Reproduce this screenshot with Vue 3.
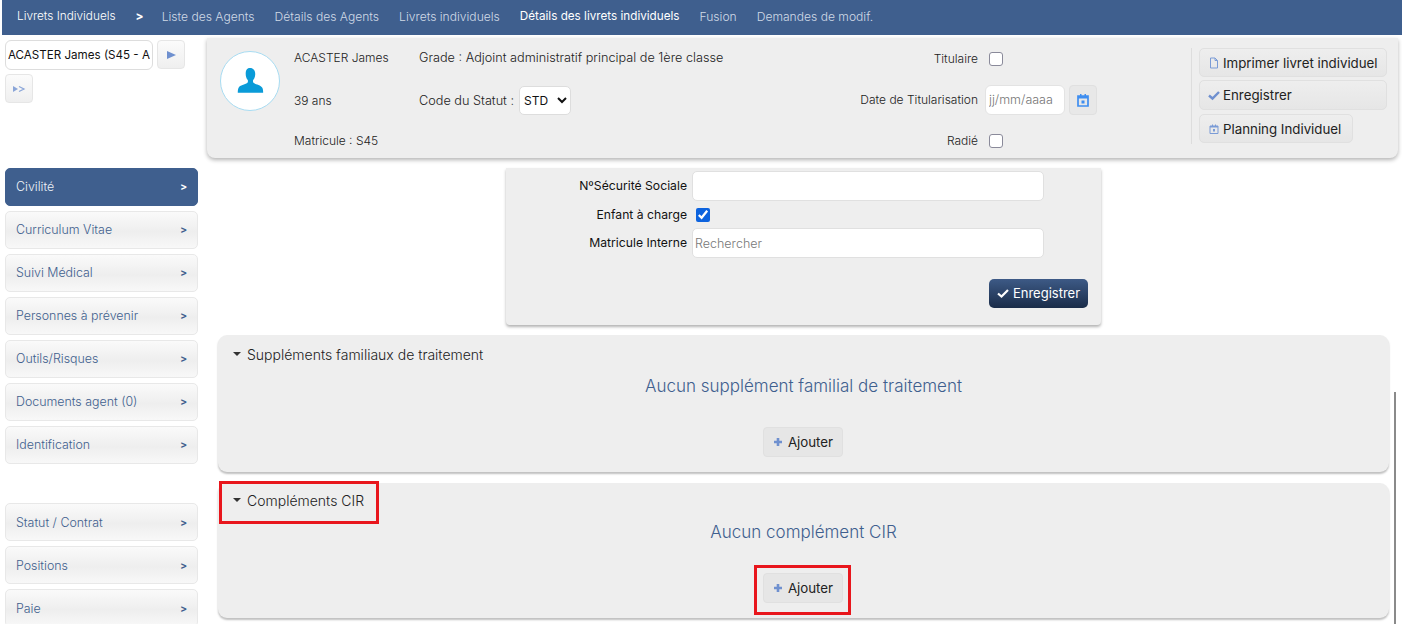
<script setup>
const navItems = [
  { label: 'Liste des Agents' },
  { label: 'Détails des Agents' },
  { label: 'Livrets individuels' },
  { label: 'Détails des livrets individuels', active: true },
  { label: 'Fusion' },
  { label: 'Demandes de modif.' },
]
const sideTop = ['Curriculum Vitae', 'Suivi Médical', 'Personnes à prévenir', 'Outils/Risques', 'Documents agent (0)', 'Identification']
const sideBottom = ['Statut / Contrat', 'Positions', 'Paie']
</script>

<template>
  <div class="page">
    <nav class="nav">
      <span class="nav-brand">Livrets Individuels</span>
      <span class="nav-sep">&gt;</span>
      <a v-for="n in navItems" :key="n.label" class="nav-link" :class="{ active: n.active }">{{ n.label }}</a>
    </nav>

    <div class="body">
      <aside class="side">
        <div class="picker">
          <input class="picker-input" value="ACASTER James (S45 - Adjoint" />
          <button class="sq"><svg width="12" height="12" viewBox="0 0 12 12"><path d="M2 2l9 4-9 4z" fill="#6f90cf"/></svg></button>
          <button class="sq"><svg width="14" height="10" viewBox="0 0 14 10"><path d="M1 2l5 3-5 3z" fill="#8aa5d8"/><path d="M7 2.500l5 2.500-5 2.500" fill="none" stroke="#8aa5d8" stroke-width="1.200"/></svg></button>
        </div>
        <div class="menu">
          <div class="item on"><span>Civilité</span><b>&gt;</b></div>
          <div v-for="s in sideTop" :key="s" class="item"><span>{{ s }}</span><b>&gt;</b></div>
        </div>
        <div class="menu second">
          <div v-for="s in sideBottom" :key="s" class="item"><span>{{ s }}</span><b>&gt;</b></div>
        </div>
      </aside>

      <main class="main">
        <section class="head">
          <div class="avatar">
            <svg width="28" height="28" viewBox="0 0 30 30"><path d="M15 1c3.600 0 5.600 2.700 5.600 6.400 0 2.400-.8 4.700-2 6.300-.6.800-.6 2.800.4 3.500 2.300 1.500 7.800 2.300 9.200 5 .7 1.300.9 3.400.9 5.300H1.900c0-1.900.2-4 .9-5.300 1.400-2.700 6.900-3.500 9.200-5 1-.7 1-2.700.4-3.500-1.200-1.600-2-3.900-2-6.300C10.400 3.700 11.400 1 15 1z" fill="#0a9bd8"/></svg>
          </div>
          <div class="who">
            <span>ACASTER James</span>
            <span>39 ans</span>
            <span>Matricule : S45</span>
          </div>
          <div class="grade">
            <span>Grade : Adjoint administratif principal de 1ère classe</span>
            <span class="statut">Code du Statut :
              <select class="sel"><option>STD</option></select>
            </span>
          </div>
          <div class="status">
            <label class="st-row"><span>Titulaire</span><input type="checkbox" class="cb" /></label>
            <div class="st-row">
              <span>Date de Titularisation</span>
              <input class="date" placeholder="jj/mm/aaaa" />
              <button class="cal"><svg width="12" height="14" viewBox="0 0 12 14"><path d="M1 3h10v10H1z" fill="none" stroke="#3f8ef0" stroke-width="1.700"/><path d="M1 3h10v2.500H1zM3 1h1.500v2H3zM7.500 1H9v2H7.500zM4.500 7.500h3v3h-3z" fill="#3f8ef0"/></svg></button>
            </div>
            <label class="st-row"><span>Radié</span><input type="checkbox" class="cb" /></label>
          </div>
          <div class="acts">
            <button class="act wide"><svg width="12" height="12" viewBox="0 0 12 12"><path d="M2.500 1h4.500l2.500 2.500V11h-7z M7 1v2.500h2.500" fill="none" stroke="#7a9bd6"/></svg>Imprimer livret individuel</button>
            <button class="act wide tall"><svg width="12" height="12" viewBox="0 0 12 12"><path d="M1 6.500l3.500 3L11 3" fill="none" stroke="#6f90cf" stroke-width="2.400"/></svg>Enregistrer</button>
            <button class="act plan"><svg width="12" height="12" viewBox="0 0 12 12"><path d="M2 3h8v7.500H2z" fill="none" stroke="#7a9bd6"/><path d="M2 3h8v1.500H2zM4 1.500h1V3H4zM7 1.500h1V3H7zM5 6h2v2.500H5z" fill="#7a9bd6"/></svg>Planning Individuel</button>
          </div>
        </section>

        <section class="form">
          <div class="f-row"><label>NºSécurité Sociale</label><input class="txt" /></div>
          <div class="f-row tight"><label>Enfant à charge</label><input type="checkbox" class="cb2" checked /></div>
          <div class="f-row"><label>Matricule Interne</label><input class="txt" placeholder="Rechercher" /></div>
          <div class="f-foot">
            <button class="save"><svg width="12" height="12" viewBox="0 0 12 12"><path d="M1 6.500l3.500 3L11 3" fill="none" stroke="#fff" stroke-width="2.200"/></svg>Enregistrer</button>
          </div>
        </section>

        <section class="panel">
          <h3 class="p-title"><i class="caret"></i>Suppléments familiaux de traitement</h3>
          <p class="p-empty">Aucun supplément familial de traitement</p>
          <button class="add"><svg width="10" height="10" viewBox="0 0 10 10"><path d="M5 1v8M1 5h8" stroke="#6f90cf" stroke-width="2.600"/></svg>Ajouter</button>
        </section>

        <section class="panel compact">
          <h3 class="p-title"><i class="caret"></i>Compléments CIR</h3>
          <p class="p-empty">Aucun complément CIR</p>
          <button class="add"><svg width="10" height="10" viewBox="0 0 10 10"><path d="M5 1v8M1 5h8" stroke="#6f90cf" stroke-width="2.600"/></svg>Ajouter</button>
          <div class="mark mark-title"></div>
          <div class="mark mark-add"></div>
        </section>
      </main>
    </div>
    <div class="rule"></div>
  </div>
</template>

<style>
html, body { margin: 0; background: #fff; overflow: hidden; }
</style>

<style scoped>
.page {
  position: relative;
  width: 1402px;
  height: 624px;
  overflow: hidden;
  font-family: Inter, "Liberation Sans", sans-serif;
  font-size: 12px;
  font-weight: 300;
  color: #222;
  background: #fff;
}
button, input, select { font-family: inherit; font-weight: 300; box-sizing: border-box; }
.nav {
  display: flex;
  align-items: center;
  height: 35px;
  margin-left: 2px;
  padding: 0 0 3px 15px;
  box-sizing: border-box;
  background: #3f5f8e;
  color: #d0dae6;
  font-size: 12.100px;
}
.nav-brand { color: #fff; font-size: 11.800px; }
.nav-sep { margin: 0 18px 0 20px; color: #fff; font-weight: 700; font-size: 11.800px; }
.nav-link { margin-right: 20px; }
.nav-link.active { color: #fff; font-weight: 400; font-size: 11.700px; }
.body { display: flex; align-items: flex-start; }
.side { width: 193px; margin-left: 5px; flex: none; }
.picker { display: flex; flex-wrap: wrap; gap: 4px; padding-top: 5px; height: 133px; box-sizing: border-box; align-content: flex-start; }
.picker-input {
  width: 148px; height: 30px; padding: 0 2px; border: 1px solid #ddd; border-radius: 6px;
  font-size: 11.600px; font-weight: 400; color: #111; background: #fff;
}
.sq {
  width: 28px; height: 29px; padding: 0; border: 1px solid #e6e6e6; border-radius: 4px;
  background: linear-gradient(#fbfbfb, #efefef); display: flex; align-items: center; justify-content: center;
}
.menu { display: flex; flex-direction: column; gap: 5px; }
.second { margin-top: 39px; }
.item {
  display: flex; align-items: center; justify-content: space-between;
  height: 38px; box-sizing: border-box; padding: 0 10px 2px;
  border: 1px solid #e8e8e8; border-radius: 5px;
  background: linear-gradient(#fafafa, #eeeeee 55%, #f8f8f8);
  color: #3f5f8e;
  font-size: 12.400px;
}
.second .item { padding-bottom: 0; }
.item b { font-size: 10px; font-weight: 800; color: #3f5f8e; }
.item.on { background: #3f5f8e; border-color: #3f5f8e; color: #eef2f7; }
.item.on b { color: #fff; }
.main { flex: 1; min-width: 0; padding: 3px 4px 0 9px; }
.head {
  display: flex; height: 120px; box-sizing: border-box; padding: 13px 11px 12px 13px;
  background: #eee; border-radius: 0 0 8px 8px; box-shadow: 0 2px 4px rgba(0,0,0,.3);
}
.avatar {
  width: 60px; height: 60px; box-sizing: border-box; border: 1px solid #a8dcf2; border-radius: 50%;
  background: #fff; display: flex; align-items: center; justify-content: center; flex: none;
}
.who { width: 125px; margin: -1px 0 0 14px; display: grid; grid-template-rows: 43px 40px 15px; align-items: start; flex: none; }
.grade { width: 370px; margin-top: -1px; display: grid; grid-template-rows: 43px 30px; flex: none; font-size: 12.700px; }
.statut { display: flex; align-items: center; gap: 5px; margin-top: -7px; height: 29px; }
.sel { width: 52px; height: 29px; background: #fff; border: 1px solid #ddd; border-radius: 5px; font-size: 12px; font-weight: 400; color: #111; }
.status { width: 308px; margin-top: -7px; display: flex; flex-direction: column; align-items: flex-end; gap: 12px; flex: none; }
.st-row { display: flex; align-items: center; height: 29px; gap: 7px; flex: none; }
.cb { width: 14px; height: 14px; margin: 0 94px 0 4px; appearance: none; background: #fff; border: 1px solid #8a8a9a; border-radius: 3px; }
.date { width: 80px; height: 30px; border: 1px solid #e3e3e3; border-radius: 6px; padding: 0 3px; font-size: 12.500px; background: #fff; }
.date::placeholder { color: #777; }
.cal { width: 28px; height: 30px; margin-left: -3px; padding: 0; border: 1px solid #e0e0e0; border-radius: 4px; background: #e8e8e8; display: flex; align-items: center; justify-content: center; }
.acts {
  margin-left: 94px; padding-left: 7px; margin-top: -3px; margin-bottom: 2px;
  border-left: 1px solid #ddd; display: flex; flex-direction: column; align-items: flex-start; gap: 3px; flex: none;
}
.act {
  height: 29px; padding: 0 7px 0 8px; display: flex; align-items: center; gap: 3px;
  border: 1px solid #e0e0e0; border-radius: 5px; background: linear-gradient(#eee, #e6e6e6);
  font-size: 13.300px; font-weight: 400; color: #222; white-space: nowrap;
}
.wide { width: 188px; }
.tall { height: 30px; }
.plan { width: 154px; margin-top: 1px; }
.form {
  width: 595px; height: 157px; box-sizing: border-box; margin: 10px 0 10px 299px; padding-top: 3px;
  background: #eee; box-shadow: 0 2px 3px rgba(0,0,0,.3); border-radius: 0 0 4px 4px;
}
.f-row { display: flex; align-items: center; height: 30px; }
.f-row.tight { height: 27px; }
.f-row label { width: 181px; text-align: right; margin-right: 5px; padding-bottom: 1px; color: #111; font-size: 12.200px; font-weight: 400; }
.txt { width: 352px; height: 30px; border: 1px solid #e0e0e0; border-radius: 5px; background: #fff; padding: 0 2px; font-size: 12.500px; }
.txt::placeholder { color: #777; }
.cb2 { width: 14px; height: 14px; margin: 0 0 0 4px; accent-color: #0d63de; }
.f-foot { display: flex; justify-content: flex-end; padding: 21px 13px 0 0; }
.save {
  width: 99px; height: 29px; padding: 0 0 1px; display: flex; align-items: center; justify-content: center; gap: 4px;
  border: 0; border-radius: 5px; background: linear-gradient(#3d5a86, #1a2c49); color: #fff; font-size: 13px; font-weight: 400;
}
.panel {
  position: relative; width: 1171px; margin: 0 0 11px 11px; box-sizing: border-box; padding: 10px 0 15px;
  background: #eee; border-radius: 9px; box-shadow: 0 2px 2px rgba(0,0,0,.25);
  display: flex; flex-direction: column; align-items: center;
}
.panel.compact { padding-top: 8px; }
.p-title {
  align-self: flex-start; margin: 0 0 0 15px; height: 18px; display: flex; align-items: center;
  font-size: 14px; font-weight: 300; color: #222;
}
.caret { width: 0; height: 0; margin-right: 6px; border: 4px solid transparent; border-top: 4px solid #333; border-bottom: 0; }
.p-empty { margin: 12px 0 0; font-size: 17px; line-height: 22px; color: #3f5f8e; }
.add {
  width: 80px; height: 30px; margin: 30px 1px 0 0; padding: 0; display: flex; align-items: center; justify-content: center; gap: 5px;
  border: 1px solid #e0e0e0; border-radius: 4px; background: #e6e6e6; color: #222; font-size: 13.300px; font-weight: 400;
}
.mark { position: absolute; border: 3px solid #e8161c; box-sizing: border-box; }
.mark-title { left: 1px; top: -2px; width: 160px; height: 43px; }
.mark-add { left: 536px; top: 82px; width: 97px; height: 50px; }
.rule { position: absolute; left: 1394px; top: 392px; width: 2px; height: 232px; background: #8a8a8a; }
</style>
